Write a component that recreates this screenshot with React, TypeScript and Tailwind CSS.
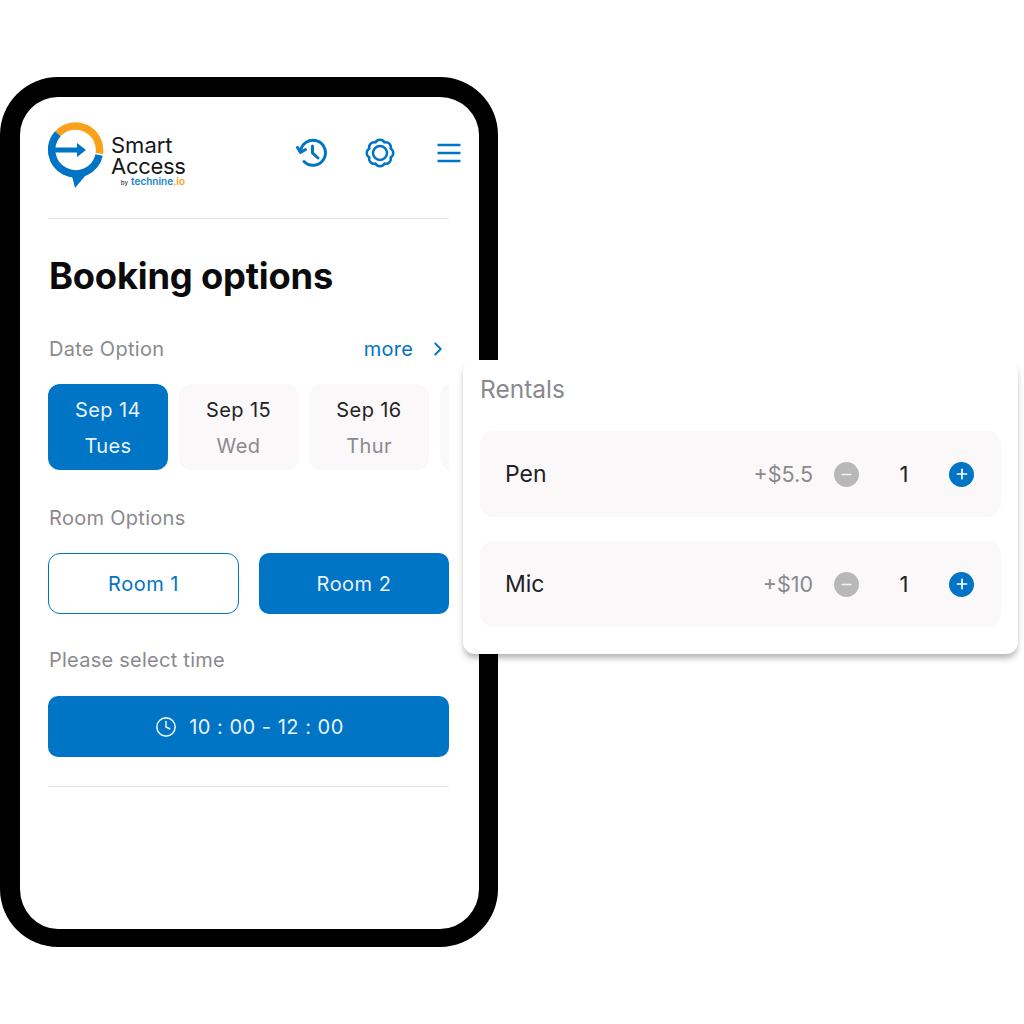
import { ChevronRight, Clock, Minus, Plus } from "lucide-react";

const dates = [
  { day: "Sep 14", week: "Tues", active: true },
  { day: "Sep 15", week: "Wed", active: false },
  { day: "Sep 16", week: "Thur", active: false },
];

const rentals = [
  { name: "Pen", price: "+$5.5" },
  { name: "Mic", price: "+$10" },
];

function Logo() {
  return (
    <svg width="56" height="67" viewBox="0 0 56 67" className="shrink-0">
      <path d="M9.900 11.700 A24 24 0 0 1 51.300 31.500" fill="none" stroke="#f9a11b" strokeWidth="7.500" />
      <path d="M51.100 33 A24 24 0 1 1 9.900 11.700" fill="none" stroke="#0074c5" strokeWidth="7.500" />
      <path d="M23 50 L27 66 L43 47 Z" fill="#0074c5" strokeLinejoin="round" />
      <path d="M3 25.500 H29 V21 L38 28 L29 35 V30.500 H3 Z" fill="#0074c5" />
    </svg>
  );
}

function HistoryIcon() {
  return (
    <svg width="32" height="32" viewBox="0 0 32 32" fill="none" stroke="#0074c5" strokeWidth="3" strokeLinecap="round" strokeLinejoin="round">
      <path d="M4.500 14.500 A12.500 12.500 0 1 1 8 24.500" />
      <path d="M1.500 10.500 L4.500 15.500 L9.500 12.500" />
      <path d="M16.500 9 V16 L22 21" />
    </svg>
  );
}

function GearIcon() {
  return (
    <svg width="30" height="30" viewBox="0 0 30 30" fill="none" stroke="#0074c5" strokeWidth="2.500" strokeLinejoin="round">
      <path d="M25.620 10.600 A5 5 0 0 1 25.620 19.400 A5 5 0 0 1 19.400 25.620 A5 5 0 0 1 10.600 25.620 A5 5 0 0 1 4.380 19.400 A5 5 0 0 1 4.380 10.600 A5 5 0 0 1 10.600 4.380 A5 5 0 0 1 19.400 4.380 A5 5 0 0 1 25.620 10.600 Z" />
      <circle cx="15" cy="15" r="7" />
    </svg>
  );
}

function BurgerIcon() {
  return (
    <svg width="24" height="20" viewBox="0 0 24 20" fill="none" stroke="#0074c5" strokeWidth="2.500">
      <path d="M0.500 2 H23.500" />
      <path d="M0.500 10 H23.500" />
      <path d="M0.500 18 H23.500" />
    </svg>
  );
}

export default function App() {
  return (
    <div className="relative h-[1024px] w-[1024px] overflow-hidden bg-white font-['Inter',sans-serif]">
      <div className="pt-[77px]">
        {/* phone */}
        <div className="h-[870px] w-[498px] rounded-[58px] border-t-[20px] border-r-[19px] border-b-[18px] border-l-[20px] border-black bg-white">
          <div className="pl-[28px] pr-[30px] pt-[25px]">
            <div className="flex h-[97px] items-start border-b border-[#e4e4e4]">
              <Logo />
              <div className="ml-[7px] mt-[13px] w-[76px] text-[#16161a]">
                <p className="text-[22px] leading-[21px]">Smart</p>
                <p className="text-[22px] leading-[21px] tracking-[-0.3px]">Access</p>
                <p className="mt-[-1px] flex items-baseline justify-end pr-[2px] text-[10px] font-semibold leading-[10px]">
                  <span className="mr-[3px] text-[6px] text-[#555]">by</span>
                  <span className="text-[#1583cf]">technine</span>
                  <span className="text-[#f9a11b]">.io</span>
                </p>
              </div>
              <div className="ml-auto mr-[-12px] mt-[15px] flex items-center">
                <HistoryIcon />
                <div className="ml-[37px]">
                  <GearIcon />
                </div>
                <div className="ml-[42px]">
                  <BurgerIcon />
                </div>
              </div>
            </div>

            <h1 className="ml-px mt-[36px] text-[36.300px] font-bold leading-[42px] tracking-[-0.2px] text-[#0b0b0d]">Booking options</h1>

            <div className="ml-px mt-[38px] flex items-center justify-between">
              <span className="text-[20px] leading-[28px] tracking-[0.3px] text-[#8a8a8e]">Date Option</span>
              <span className="flex items-center text-[20px] leading-[28px] tracking-[0.2px] text-[#0074c5]">
                more
                <ChevronRight size={22} className="ml-[14px]" />
              </span>
            </div>

            <div className="mt-[21px] flex gap-[10.500px] overflow-hidden">
              {dates.map((d) => (
                <div
                  key={d.day}
                  className={`flex h-[86px] w-[120px] shrink-0 flex-col items-center justify-center gap-[8px] rounded-[12px] pt-[2px] text-[20px] leading-[28px] tracking-[0.4px] ${d.active ? "bg-[#0074c5] text-[#e8f3fb]" : "bg-[#faf8f9] text-[#222226]"}`}
                >
                  <span>{d.day}</span>
                  <span className={d.active ? "" : "text-[#8a8a8e]"}>{d.week}</span>
                </div>
              ))}
              <div className="h-[86px] w-[120px] shrink-0 rounded-[12px] bg-[#faf8f9]" />
            </div>

            <p className="ml-px mt-[34px] text-[20px] leading-[28px] tracking-[0.3px] text-[#8a8a8e]">Room Options</p>

            <div className="mt-[21px] flex gap-[20px]">
              <div className="flex h-[61px] w-[191px] items-center justify-center rounded-[12px] border border-[#0074c5] text-[20px] tracking-[0.5px] text-[#0074c5]">Room 1</div>
              <div className="flex h-[61px] flex-1 items-center justify-center rounded-[10px] bg-[#0074c5] text-[20px] tracking-[0.5px] text-[#e8f3fb]">Room 2</div>
            </div>

            <p className="ml-px mt-[32px] text-[20px] leading-[28px] tracking-[0.25px] text-[#8a8a8e]">Please select time</p>

            <div className="mt-[22px] flex h-[61px] items-center justify-center gap-[12px] rounded-[10px] bg-[#0074c5] pl-[2px] text-[20px] tracking-[0.5px] text-[#e8f3fb]">
              <Clock size={22} strokeWidth={1.75} />
              <span>10 : 00 - 12 : 00</span>
            </div>

            <div className="mt-[29px] border-b border-[#e4e4e4]" />
          </div>
        </div>
      </div>

      {/* rentals card */}
      <div className="absolute left-[463px] top-[360px] h-[294px] w-[555px] rounded-[12px] bg-white px-[17px] pt-[15px] shadow-[0_5px_6px_-1px_rgba(0,0,0,0.3)]">
        <p className="text-[24.500px] leading-[28px] text-[#8a8a8e]">Rentals</p>
        <div className="mt-[28px] flex flex-col gap-[24px]">
          {rentals.map((r) => (
            <div key={r.name} className="flex h-[86px] items-center rounded-[14px] bg-[#faf8f9] pl-[25px] pr-[27px]">
              <span className="text-[23px] text-[#222226]">{r.name}</span>
              <span className="ml-auto text-[21.500px] text-[#8a8a8e]">{r.price}</span>
              <span className="ml-[21px] flex h-[25px] w-[25px] items-center justify-center rounded-full bg-[#b8b8b8]">
                <Minus size={15} color="#f2f2f2" strokeWidth={2.5} />
              </span>
              <span className="w-[90px] text-center text-[22px] text-[#222226]">1</span>
              <span className="flex h-[25px] w-[25px] items-center justify-center rounded-full bg-[#0074c5]">
                <Plus size={16} color="#ffffff" strokeWidth={2.5} />
              </span>
            </div>
          ))}
        </div>
      </div>
    </div>
  );
}
